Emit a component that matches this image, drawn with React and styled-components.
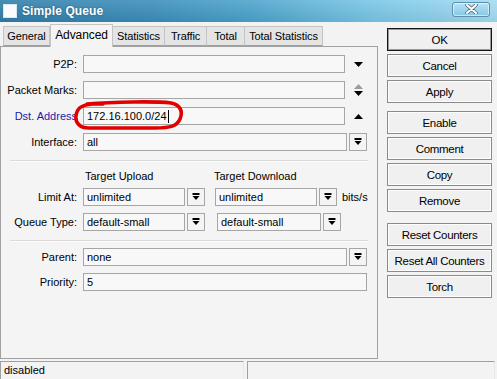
import React from "react";
import styled, { createGlobalStyle } from "styled-components";

const GlobalStyle = createGlobalStyle`
  html, body {
    margin: 0;
    padding: 0;
    background: #f3f3f3;
  }
  body {
    font-family: "Liberation Sans", Arial, sans-serif;
    font-size: 11px;
    color: #000;
  }
`;

const Window = styled.div`
  width: 497px;
  height: 379px;
  background: #f3f3f3;
  display: flex;
  flex-direction: column;
  overflow: hidden;
`;

const TitleBar = styled.div`
  height: 22px;
  flex: none;
  display: flex;
  align-items: center;
  gap: 5px;
  padding: 0 7px 0 3px;
  background: linear-gradient(180deg, rgba(255, 255, 255, 0.12), rgba(0, 0, 0, 0.06)),
    linear-gradient(90deg, #2f7ea9 0%, #3a8dba 30%, #4aa2cb 50%, #78c6e6 75%, #a3dcf2 100%);
`;

const AppIcon = styled.div`
  width: 14px;
  height: 14px;
  background: #fbfbfb;
  border: 1px solid #d8e8f0;
  box-sizing: border-box;
`;

const Title = styled.div`
  font-weight: bold;
  font-size: 12px;
  color: #fff;
  letter-spacing: 0.1px;
  text-shadow: 0 0 2px rgba(0, 40, 70, 0.5);
  flex: 1;
`;

const CloseButton = styled.div`
  width: 38px;
  height: 15px;
  margin-top: -4px;
  box-sizing: border-box;
  border: 1px solid #5c8fa8;
  border-radius: 3px;
  background: linear-gradient(180deg, #b6e4f5, #86c8e4);
  box-shadow: inset 0 0 0 1px rgba(255, 255, 255, 0.55);
  display: flex;
  align-items: center;
  justify-content: center;
`;

const Body = styled.div`
  flex: 1;
  display: flex;
  align-items: flex-start;
`;

const LeftColumn = styled.div`
  width: 378px;
  display: flex;
  flex-direction: column;
`;

const TabStrip = styled.div`
  display: flex;
  align-items: flex-end;
  height: 24px;
  padding: 0 0 0 3px;
  position: relative;
  z-index: 1;
`;

const Tab = styled.div`
  width: ${(p) => p.$w}px;
  height: ${(p) => (p.$active ? 23 : 20)}px;
  margin-bottom: ${(p) => (p.$active ? -1 : 0)}px;
  box-sizing: border-box;
  display: flex;
  align-items: center;
  justify-content: center;
  background: ${(p) => (p.$active ? "#f4f4f4" : "#e4e4e4")};
  border: 1px solid #c4c4c4;
  border-bottom: ${(p) => (p.$active ? "none" : "1px solid #a0a0a0")};
  border-left: ${(p) => (p.$first || p.$active ? "1px solid #c4c4c4" : "none")};
  font-size: ${(p) => (p.$active ? 12 : 11)}px;
  padding-bottom: ${(p) => (p.$active ? 3 : 0)}px;
  letter-spacing: -0.1px;
`;

const Panel = styled.div`
  height: 313px;
  box-sizing: border-box;
  border: 1px solid #a0a0a0;
  background: #f4f4f4;
  padding-top: 8px;
  display: flex;
  flex-direction: column;
`;

const Row = styled.div`
  display: flex;
  align-items: center;
  height: 18px;
  margin-top: ${(p) => p.$mt || 0}px;
  position: relative;
`;

const Label = styled.div`
  width: 78px;
  padding-right: 2px;
  box-sizing: border-box;
  text-align: right;
  color: ${(p) => (p.$blue ? "#1c1caa" : "#000")};
  white-space: nowrap;
  margin-right: 4px;
`;

const Field = styled.div`
  width: 284px;
  display: flex;
  align-items: center;
  gap: 2px;
  position: relative;
`;

const Input = styled.div`
  flex: ${(p) => (p.$w ? "none" : 1)};
  width: ${(p) => (p.$w ? `${p.$w}px` : "auto")};
  height: 18px;
  box-sizing: border-box;
  border: 1px solid #a6a6a6;
  background: #f8f8f8;
  padding-left: 3px;
  display: flex;
  align-items: center;
  white-space: nowrap;
  overflow: hidden;
`;

const Caret = styled.span`
  display: inline-block;
  width: 1px;
  height: 13px;
  background: #000;
  margin-left: 1px;
`;

const DropButton = styled.div`
  width: 18px;
  height: 18px;
  flex: none;
  box-sizing: border-box;
  border: 1px solid #a6a6a6;
  background: #f4f4f4;
  display: flex;
  align-items: center;
  justify-content: center;
`;

const SideArrow = styled.div`
  width: 17px;
  flex: none;
  display: flex;
  flex-direction: column;
  align-items: center;
  justify-content: center;
  gap: 2px;
  padding-left: 3px;
`;

const Separator = styled.div`
  height: 1px;
  margin: ${(p) => p.$mt}px 9px 0 9px;
  background: #dadada;
  box-shadow: 0 1px 0 #fbfbfb;
`;

const HeaderRow = styled.div`
  display: flex;
  height: 14px;
  align-items: center;
  margin-top: 8px;
  padding-left: 84px;
  font-size: 11px;
`;

const HeaderCell = styled.div`
  width: ${(p) => p.$w}px;
`;

const Pair = styled.div`
  display: flex;
  align-items: center;
  gap: 2px;
  margin-right: ${(p) => p.$mr || 0}px;
`;

const Unit = styled.div`
  margin-left: 5px;
`;

const Highlight = styled.svg`
  position: absolute;
  left: -10px;
  top: -7px;
  pointer-events: none;
`;

const ButtonColumn = styled.div`
  margin-left: 9px;
  padding-top: 6px;
  width: 105px;
  display: flex;
  flex-direction: column;
`;

const ButtonGroup = styled.div`
  display: flex;
  flex-direction: column;
  gap: 3px;
  margin-top: ${(p) => p.$mt || 0}px;
`;

const Button = styled.div`
  height: 23px;
  box-sizing: border-box;
  border: 1px solid ${(p) => (p.$default ? "#151515" : "#8a8a8a")};
  box-shadow: inset 0 0 0 1px ${(p) => (p.$default ? "#9a9a9a" : "#fdfdfd")};
  background: #f0f0f0;
  display: flex;
  align-items: center;
  justify-content: center;
  font-size: 11.5px;
  letter-spacing: -0.3px;
`;

const StatusBar = styled.div`
  height: 18px;
  flex: none;
  display: flex;
  gap: 3px;
  padding-right: 2px;
`;

const StatusCell = styled.div`
  flex: ${(p) => p.$grow};
  box-sizing: border-box;
  border-top: 1px solid #a0a0a0;
  border-left: 1px solid #a0a0a0;
  border-right: 1px solid #e8e8e8;
  padding: 2px 0 0 3px;
  font-size: 11px;
`;

function DropIcon() {
  return (
    <svg width="8" height="8" viewBox="0 0 8 8">
      <rect x="0.5" y="0" width="7" height="2" fill="#000" />
      <polygon points="0.5,3 7.5,3 4,7" fill="#000" />
    </svg>
  );
}

function Triangle({ up, color = "#000" }) {
  return (
    <svg width="9" height="5" viewBox="0 0 9 5">
      <polygon points={up ? "0,5 9,5 4.5,0" : "0,0 9,0 4.5,5"} fill={color} />
    </svg>
  );
}

const tabs = [
  { name: "General", w: 47 },
  { name: "Advanced", w: 63, active: true },
  { name: "Statistics", w: 52 },
  { name: "Traffic", w: 42 },
  { name: "Total", w: 38 },
  { name: "Total Statistics", w: 78 },
];

export default function App() {
  return (
    <Window>
      <GlobalStyle />
      <TitleBar>
        <AppIcon />
        <Title>Simple Queue</Title>
        <CloseButton>
          <svg width="13" height="10" viewBox="0 0 13 10">
            <path d="M2 1 L11 9 M11 1 L2 9" stroke="#50707e" strokeWidth="3.6" strokeLinecap="round" />
            <path d="M2 1 L11 9 M11 1 L2 9" stroke="#fff" strokeWidth="2" strokeLinecap="round" />
          </svg>
        </CloseButton>
      </TitleBar>
      <Body>
        <LeftColumn>
          <TabStrip>
            {tabs.map((t, i) => (
              <Tab key={t.name} $w={t.w} $active={t.active} $first={i === 0}>
                {t.name}
              </Tab>
            ))}
          </TabStrip>
          <Panel>
            <Row>
              <Label>P2P:</Label>
              <Field>
                <Input />
                <SideArrow>
                  <Triangle />
                </SideArrow>
              </Field>
            </Row>
            <Row $mt={8}>
              <Label>Packet Marks:</Label>
              <Field>
                <Input />
                <SideArrow>
                  <Triangle up color="#9c9c9c" />
                  <Triangle />
                </SideArrow>
              </Field>
            </Row>
            <Row $mt={8}>
              <Label $blue>Dst. Address</Label>
              <Field>
                <Input>
                  172.16.100.0/24
                  <Caret />
                </Input>
                <SideArrow>
                  <Triangle up />
                </SideArrow>
                <Highlight width="112" height="31" viewBox="0 0 112 31">
                  <path
                    d="M14 4 C40 2 82 1 98 3 C108 5 110 12 107 19 C104 26 98 28 82 28 L16 28 C7 28 2 23 3 16 C4 8 8 5 20 4 L30 4"
                    fill="none"
                    stroke="#e10000"
                    strokeWidth="3.6"
                    strokeLinecap="round"
                  />
                </Highlight>
              </Field>
            </Row>
            <Row $mt={8}>
              <Label>Interface:</Label>
              <Field>
                <Input>all</Input>
                <DropButton>
                  <DropIcon />
                </DropButton>
              </Field>
            </Row>

            <Separator $mt={9} />

            <HeaderRow>
              <HeaderCell $w={129}>Target Upload</HeaderCell>
              <HeaderCell $w={120}>Target Download</HeaderCell>
            </HeaderRow>
            <Row $mt={5}>
              <Label>Limit At:</Label>
              <Pair $mr={10}>
                <Input $w={102}>unlimited</Input>
                <DropButton>
                  <DropIcon />
                </DropButton>
              </Pair>
              <Pair>
                <Input $w={102}>unlimited</Input>
                <DropButton>
                  <DropIcon />
                </DropButton>
              </Pair>
              <Unit>bits/s</Unit>
            </Row>
            <Row $mt={7}>
              <Label>Queue Type:</Label>
              <Pair $mr={12}>
                <Input $w={102}>default-small</Input>
                <DropButton>
                  <DropIcon />
                </DropButton>
              </Pair>
              <Pair>
                <Input $w={104}>default-small</Input>
                <DropButton>
                  <DropIcon />
                </DropButton>
              </Pair>
            </Row>

            <Separator $mt={9} />

            <Row $mt={7}>
              <Label>Parent:</Label>
              <Field>
                <Input>none</Input>
                <DropButton>
                  <DropIcon />
                </DropButton>
              </Field>
            </Row>
            <Row $mt={7}>
              <Label>Priority:</Label>
              <Field>
                <Input>5</Input>
              </Field>
            </Row>
          </Panel>
        </LeftColumn>
        <ButtonColumn>
          <ButtonGroup>
            <Button $default>OK</Button>
            <Button>Cancel</Button>
            <Button>Apply</Button>
          </ButtonGroup>
          <ButtonGroup $mt={8}>
            <Button>Enable</Button>
            <Button>Comment</Button>
            <Button>Copy</Button>
            <Button>Remove</Button>
          </ButtonGroup>
          <ButtonGroup $mt={11}>
            <Button>Reset Counters</Button>
            <Button>Reset All Counters</Button>
            <Button>Torch</Button>
          </ButtonGroup>
        </ButtonColumn>
      </Body>
      <StatusBar>
        <StatusCell $grow={244}>disabled</StatusCell>
        <StatusCell $grow={249} />
      </StatusBar>
    </Window>
  );
}
